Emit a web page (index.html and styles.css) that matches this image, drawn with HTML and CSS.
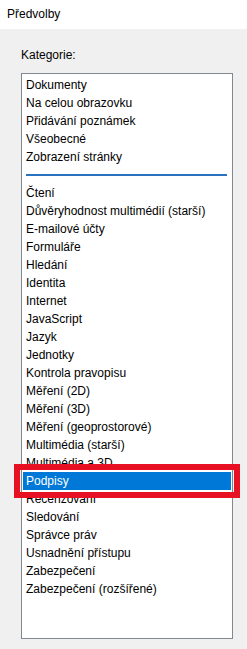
FILE: index.html
```html
<!DOCTYPE html>
<html lang="cs">
<head>
	<meta charset="UTF-8">
	<title>Předvolby</title>
	<link rel="stylesheet" href="styles.css">
</head>
<body>
	<div class="titlebar">Předvolby</div>
	<div class="panel">
		<div class="label">Kategorie:</div>
		<ul class="listbox">
			<li>Dokumenty</li>
			<li>Na celou obrazovku</li>
			<li>Přidávání poznámek</li>
			<li>Všeobecné</li>
			<li>Zobrazení stránky</li>
			<li class="sep"></li>
			<li>Čtení</li>
			<li>Důvěryhodnost multimédií (starší)</li>
			<li>E-mailové účty</li>
			<li>Formuláře</li>
			<li>Hledání</li>
			<li>Identita</li>
			<li>Internet</li>
			<li>JavaScript</li>
			<li>Jazyk</li>
			<li>Jednotky</li>
			<li>Kontrola pravopisu</li>
			<li>Měření (2D)</li>
			<li>Měření (3D)</li>
			<li>Měření (geoprostorové)</li>
			<li>Multimédia (starší)</li>
			<li>Multimédia a 3D</li>
			<li class="selected">Podpisy<span class="mark"></span></li>
			<li>Recenzování</li>
			<li>Sledování</li>
			<li>Správce práv</li>
			<li>Usnadnění přístupu</li>
			<li>Zabezpečení</li>
			<li>Zabezpečení (rozšířené)</li>
		</ul>
	</div>
</body>
</html>
```

FILE: styles.css
```css
*{padding: 0;margin: 0;box-sizing: border-box;}
body{
	background: #f0f0f0;
	font: 12px/18px "Liberation Sans", Arial, sans-serif;
	color: #000;
}
.titlebar{
	height: 29px;
	line-height: 29px;
	padding-left: 7px;
	background: #fff;
}
.panel{
	padding: 17px 14px 0 21px;
}
.label{
	height: 18px;
	margin-bottom: 9px;
}
.listbox{
	width: 212px;
	height: 566px;
	border: 1px solid #828790;
	background: #fff;
	padding-top: 2px;
	list-style: none;
}
.listbox li{
	height: 18px;
	margin: 0 1px;
	padding-left: 3px;
	white-space: nowrap;
}
.listbox .sep{
	position: relative;
}
.listbox .sep:after{
	content: "";
	display: block;
	position: absolute;
	left: 3px; right: 4px; top: 8px;
	height: 2px;
	background: #2b72c0;
}
.listbox .selected{
	position: relative;
	background: #0078d7;
	color: #fff;
}
.mark{
	position: absolute;
	top: -8px; bottom: -8px;
	left: -9px; right: -9px;
	border: 6px solid #e81123;
	z-index: 1;
}
```
